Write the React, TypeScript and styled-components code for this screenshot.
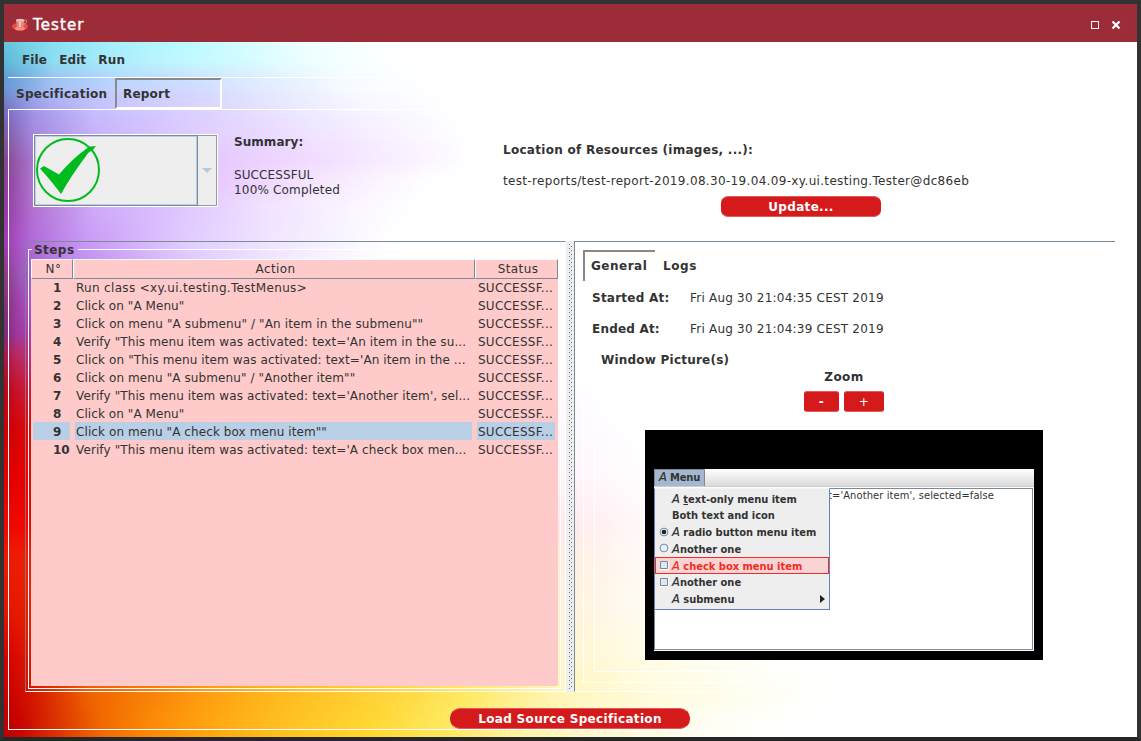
import React from 'react';
import styled, { createGlobalStyle, css } from 'styled-components';

const GlobalStyle = createGlobalStyle`
  * { box-sizing: border-box; }
  html, body { margin: 0; padding: 0; background: #323232; }
  body { font: 12px/15px "DejaVu Sans", sans-serif; color: #333; overflow: hidden; }
`;

const steel = '#7a8a99';

/* ---------- painted background ---------- */

type Stop = [string, number];
const bands: { y: number; stops: Stop[] }[] = [
  { y: 0, stops: [['#66c4dc', 0], ['#84e0f0', 45], ['#a4f1fc', 110], ['#bcfaff', 185], ['#dafeff', 255], ['#f1ffff', 310], ['#fff', 390]] },
  { y: 20, stops: [['#5cb8d8', 0], ['#90dcf2', 50], ['#acecfc', 110], ['#c0f8ff', 180], ['#d8fbff', 250], ['#f0ffff', 315], ['#fff', 400]] },
  { y: 34, stops: [['#60a0d4', 0], ['#98c8f0', 50], ['#b8dcff', 120], ['#cde6ff', 200], ['#e4f4ff', 280], ['#f6fcff', 340], ['#fff', 420]] },
  { y: 50, stops: [['#6c90d4', 0], ['#a8baf4', 45], ['#c4ceff', 110], ['#d4d8ff', 190], ['#e5eaff', 270], ['#f8faff', 350], ['#fff', 440]] },
  { y: 72, stops: [['#7868bc', 0], ['#a294e6', 30], ['#c6bcfc', 90], ['#d8ccff', 170], ['#e5ddff', 250], ['#f4f0ff', 340], ['#fff', 450]] },
  { y: 100, stops: [['#80549c', 0], ['#a884dc', 30], ['#c8aefa', 90], ['#e0ccff', 190], ['#eedcff', 290], ['#f8efff', 380], ['#fff', 470]] },
  { y: 118, stops: [['#844490', 0], ['#ac7ad2', 30], ['#caa8fa', 90], ['#dec0ff', 170], ['#edd2ff', 260], ['#f6eaff', 370], ['#fff', 470]] },
  { y: 140, stops: [['#8a3c98', 0], ['#b078d2', 30], ['#cea8f8', 90], ['#dfbcff', 170], ['#f0d8ff', 260], ['#fbf4ff', 370], ['#fff', 430]] },
  { y: 165, stops: [['#943aa0', 0], ['#b274d4', 30], ['#cfaaf8', 90], ['#dec4ff', 170], ['#f0e2ff', 260], ['#fcf8ff', 360], ['#fff', 420]] },
  { y: 200, stops: [['#a03ab0', 0], ['#b068d8', 26], ['#c898f6', 80], ['#e0ccff', 180], ['#f2e8ff', 280], ['#fff', 390]] },
  { y: 235, stops: [['#8a3880', 0], ['#9c58b8', 16], ['#b880e8', 60], ['#e4ccff', 200], ['#f8f2ff', 300], ['#fff', 380]] },
  { y: 262, stops: [['#803078', 0], ['#a040a8', 14], ['#b858d0', 30], ['#fff', 380]] },
  { y: 292, stops: [['#782878', 0], ['#a038a0', 14], ['#b040b0', 30], ['#fff', 540]] },
  { y: 312, stops: [['#a8184c', 0], ['#b82c64', 14], ['#c03488', 30], ['#fff', 540]] },
  { y: 345, stops: [['#b00818', 0], ['#c81430', 14], ['#d02048', 30], ['#fffcff', 556], ['#fff', 610]] },
  { y: 385, stops: [['#c80008', 0], ['#dc0808', 20], ['#fdf8ff', 556], ['#fff', 630]] },
  { y: 435, stops: [['#e00000', 0], ['#e80400', 24], ['#fff4fa', 556], ['#fffafd', 610], ['#fff', 660]] },
  { y: 482, stops: [['#ee0800', 0], ['#f00800', 24], ['#ffe8ec', 556], ['#fff4f6', 615], ['#fff', 680]] },
  { y: 515, stops: [['#ec1804', 0], ['#f02008', 24], ['#ffeede', 556], ['#fff8f2', 620], ['#fff', 700]] },
  { y: 570, stops: [['#e41400', 0], ['#e82000', 26], ['#fff2d8', 556], ['#fffaf0', 630], ['#fff', 720]] },
  { y: 615, stops: [['#d40000', 0], ['#e01800', 26], ['#ffb020', 260], ['#fff6cc', 556], ['#fffce6', 640], ['#fff', 780]] },
  { y: 652, stops: [['#c80000', 0], ['#d41400', 26], ['#f06400', 86], ['#ff9810', 190], ['#ffb81c', 270], ['#ffd43c', 380], ['#ffe860', 460], ['#fff6bc', 560], ['#fffce0', 660], ['#fff', 830]] },
  { y: 680, stops: [['#bc0000', 0], ['#c80400', 16], ['#d83000', 50], ['#f06800', 96], ['#fc8c08', 150], ['#ffa812', 210], ['#ffc424', 290], ['#ffd834', 370], ['#ffe860', 440], ['#fff4a8', 520], ['#fff9d4', 600], ['#fffdf0', 690], ['#fff', 780]] },
];

const Backdrop = styled.div`
  position: absolute;
  inset: 0;
  z-index: -1;
  display: grid;
`;

const Band = styled.div<{ $y: number; $from: number; $stops: Stop[] }>`
  grid-area: 1 / 1;
  background: linear-gradient(to right, ${p => p.$stops.map(([c, x]) => `${c} ${x}px`).join(', ')});
  ${p => p.$y > 0 && css`mask-image: linear-gradient(to bottom, transparent ${p.$from}px, #000 ${p.$y}px);`}
`;

/* ---------- window chrome ---------- */

const Frame = styled.div`
  width: 1141px;
  height: 741px;
  border: 4px solid #323232;
  border-bottom-color: #262626;
  display: flex;
  flex-direction: column;
`;

const TitleBar = styled.header`
  height: 38px;
  background: #9c2d38;
  color: #fff;
  display: flex;
  align-items: center;
  padding: 4px 16px 0 8px;
`;

const Title = styled.h1`
  margin: 0 auto 0 4px;
  font-size: 15px;
  line-height: 18px;
  font-weight: 400;
  letter-spacing: 1.1px;
  -webkit-text-stroke: 0.4px #fff;
`;

const WindowButtons = styled.div`
  display: flex;
  gap: 12px;
`;

const Client = styled.div`
  position: relative;
  z-index: 0;
  flex: 1;
  padding-left: 4px;
`;

const MenuBar = styled.nav`
  height: 36px;
  border-bottom: 1px solid #fff;
  display: flex;
  gap: 12px;
  padding: 11px 0 0 14px;
`;

const Label = styled.span<{ $ls?: number }>`
  font-weight: bold;
  white-space: nowrap;
  letter-spacing: ${p => p.$ls ?? 0.28}px;
`;

const Text = styled.span<{ $ls?: number }>`
  white-space: nowrap;
  letter-spacing: ${p => p.$ls ?? 0.22}px;
`;

const Tabs = styled.div<{ $h: number }>`
  display: flex;
  height: ${p => p.$h}px;
`;

const MainTab = styled.div<{ $active?: boolean }>`
  padding: 9px 0 0 ${p => (p.$active ? 6 : 8)}px;
  width: 107px;
  ${p => p.$active && css`
    padding-top: 7px;
    border: 2px solid #fff;
    border-top-color: #8a8a8a;
    border-left-color: #8a8a8a;
  `}
`;

const SubTab = styled.div<{ $active?: boolean }>`
  padding: 9px 0 0 8px;
  width: 72px;
  ${p => p.$active && css`
    padding: 7px 0 0 6px;
    border-top: 2px solid #888;
    border-left: 2px solid #888;
  `}
`;

const Body = styled.main`
  width: 1125px;
  height: 621px;
  border: 1px solid #fff;
`;

/* ---------- summary area ---------- */

const SummaryRow = styled.section`
  height: 131px;
  display: flex;
  padding-left: 24px;
`;

const Combo = styled.div`
  margin-top: 24px;
  width: 185px;
  height: 73px;
  border: 1px solid #fff;
  display: flex;
`;

const ComboValue = styled.div`
  width: 164px;
  border: 1px solid ${steel};
  box-shadow: inset 0 0 0 1px #b8cfe5;
  background: #eee;
  padding: 1px 1px;
`;

const ComboArrow = styled.div`
  flex: 1;
  border: 1px solid #999;
  border-left: 0;
  background: #eee;
  display: flex;
  align-items: center;
  justify-content: center;
`;

const SummaryText = styled.div`
  margin: 25px 0 0 16px;
  width: 269px;
  display: flex;
  flex-direction: column;
`;

const Result = styled.div`
  display: flex;
  flex-direction: column;
  margin-top: 18px;
`;

const Location = styled.div`
  display: flex;
  flex-direction: column;
  align-items: flex-start;
  gap: 16px;
  padding-top: 33px;
`;

const Button = styled.button<{ $w: number; $r?: number; $light?: boolean }>`
  display: block;
  width: ${p => p.$w}px;
  height: 21px;
  padding: 1px 0 0;
  border: 1px solid #e05a5a;
  border-left-color: #d41a1a;
  border-right-color: #d41a1a;
  border-radius: ${p => p.$r ?? 7}px;
  background: #d41a1a;
  color: #fff;
  font: bold 12px/18px "DejaVu Sans", sans-serif;
  letter-spacing: 0.33px;
  ${p => p.$light && css`font-weight: normal;`}
`;

const UpdateButton = styled(Button)`
  margin: -9px 0 0 218px;
`;

const LoadButton = styled(Button)`
  margin: 16px 0 0 441px;
`;

/* ---------- split pane ---------- */

const Split = styled.section`
  display: flex;
  height: 451px;
  padding-left: 16px;
`;

const Pane = styled.div<{ $w: number }>`
  width: ${p => p.$w}px;
  border: 1px solid #fff;
  border-top-color: ${steel};
  border-left-color: ${steel};
`;

const LeftPane = styled(Pane)`
  border-left-color: rgba(122, 138, 153, 0.8);
  padding-left: 2px;
`;

const RightPane = styled(Pane)`
  border-right: 0;
  padding: 8px 0 0 8px;
`;

const Divider = styled.div`
  width: 8px;
  background-color: #eee;
  padding: 3px 1px 3px 3px;
`;

const Bumps = styled.div`
  height: 100%;
  background:
    radial-gradient(circle at 0.5px 0.5px, #66717c 0.7px, transparent 0.8px) 0 0 / 4px 4px,
    radial-gradient(circle at 2.5px 2.5px, #66717c 0.7px, transparent 0.8px) 0 0 / 4px 4px;
`;

const Group = styled.fieldset<{ $w: number; $h: number }>`
  margin: 0;
  min-width: 0;
  width: ${p => p.$w}px;
  height: ${p => p.$h}px;
  border: 1px solid #fff;
  padding: 2px;
`;

const Legend = styled.legend<{ $ls?: number; $x?: number }>`
  margin-left: ${p => p.$x ?? 1}px;
  padding: 0 3px 0 2px;
  font-weight: bold;
  height: 15px;
  line-height: 17px;
  letter-spacing: ${p => p.$ls ?? 0.3}px;
`;

const Table = styled.div`
  width: 527px;
  height: 427px;
  background: #fecbca;
`;

const columns = css`
  display: grid;
  grid-template-columns: 42px 402px 83px;
`;

const HeaderRow = styled.div`
  ${columns}
  height: 19px;
`;

const HeaderCell = styled.div`
  border: 1px solid #fff;
  border-right-color: ${steel};
  border-bottom-color: ${steel};
  padding-left: 3px;
  text-align: center;
  line-height: 18px;
  letter-spacing: 0.4px;
`;

const Row = styled.div`
  ${columns}
  height: 18px;
  line-height: 20px;
`;

const Cell = styled.div<{ $sel?: boolean; $ls?: number; $num?: boolean }>`
  height: 18px;
  margin: 0 3px 0 2px;
  padding-left: 1px;
  white-space: nowrap;
  letter-spacing: ${p => p.$ls ?? 0.2}px;
  ${p => p.$num && css`font-weight: bold; padding-left: 20px; letter-spacing: 0;`}
  ${p => p.$sel && css`background: #b8cfe5;`}
`;

const Details = styled.div`
  width: 522px;
  height: 402px;
  border: 1px solid rgba(255, 255, 255, 0.85);
`;

const Field = styled.div`
  display: grid;
  grid-template-columns: 98px auto;
  height: 31px;
  padding: 9px 0 0 8px;
`;

const PictureGroup = styled(Group)`
  margin: 8px 0 0 10px;
`;

const PictureBody = styled.div`
  display: flex;
  flex-direction: column;
  align-items: center;
  padding-top: 1px;
`;

const ZoomButtons = styled.div`
  display: flex;
  gap: 5px;
  margin: 6px 0 18px;
`;

/* ---------- captured window ---------- */

const Picture = styled.div`
  width: 398px;
  height: 230px;
  background: #000;
  padding: 39px 9px 9px;
`;

const Mini = styled.div`
  position: relative;
  height: 182px;
  background: #fff;
  font: 11px/17px "DejaVu Sans Condensed", "DejaVu Sans", sans-serif;
`;

const MiniBar = styled.div`
  height: 18px;
  background: linear-gradient(#fff, #dadada);
  border-bottom: 1px solid #ccc;
`;

const MiniMenu = styled.div`
  width: 51px;
  height: 17px;
  background: #a3b8cc;
  border: 1px solid ${steel};
  border-bottom: 0;
  padding-left: 4px;
  line-height: 15px;
  font-weight: bold;
  white-space: nowrap;
  letter-spacing: -0.15px;
`;

const MiniArea = styled.div`
  margin: 1px 1px 0 0;
  height: 162px;
  border: 1px solid ${steel};
  padding-left: 173px;
  line-height: 13px;
  white-space: nowrap;
  letter-spacing: 0.11px;
`;

const Popup = styled.div`
  position: absolute;
  left: 0;
  top: 19px;
  width: 176px;
  height: 122px;
  background: #eee;
  border: 1px solid #6382bf;
  border-top-color: #f4f4f4;
  padding-top: 1px;
`;

const Item = styled.div<{ $hot?: boolean }>`
  height: 16.8px;
  line-height: 16.8px;
  display: flex;
  align-items: center;
  padding-right: 4px;
  font-weight: bold;
  white-space: nowrap;
  svg { flex: none; }
  ${p => p.$hot && css`
    color: #f02c22;
    background: #f8d4d4;
    box-shadow: inset 0 0 0 1px #ee2e24;
  `}
`;

const Mark = styled.span`
  width: 17px;
  height: 17px;
  display: flex;
  align-items: center;
  padding: 0 0 1px 4px;
`;

const Slanted = styled.span`
  font-family: "DejaVu Sans", sans-serif;
  font-weight: normal;
  font-style: italic;
  font-size: 11.5px;
  -webkit-text-stroke: 0.2px currentColor;
`;

const Grow = styled.span`
  flex: 1;
  padding-top: 2px;
`;

const Check = () => (
  <svg width="66" height="66" viewBox="0 0 66 66">
    <circle cx="32" cy="33" r="31" fill="none" stroke="#00bb1e" strokeWidth="2" />
    <path d="M4 31.500 L8 29 L23 37.500 Q36 22 50 12 Q52 9.500 55 9.500 L60 9 L56 14 Q53 14 50 19 Q35 39 25 57 Q17 46 4 31.500Z" fill="#00bb1e" />
  </svg>
);

const Cup = () => (
  <svg width="17" height="14" viewBox="0 0 17 14">
    <ellipse cx="8" cy="8.500" rx="8" ry="4" fill="#f04a40" />
    <ellipse cx="8" cy="10.400" rx="5" ry="2" fill="#ff8a80" />
    <path d="M4 2 Q8 0 12.500 2 L11.500 9 Q8 11 5 9Z" fill="#e08880" />
    <ellipse cx="8.200" cy="2.200" rx="4.200" ry="1.500" fill="#e8b8b4" />
    <path d="M8 4v5" stroke="#fbd0cc" strokeWidth="1.500" />
    <path d="M12 3 Q15 0 14.500 4 Q14 6 11.800 6" fill="none" stroke="#f08078" />
  </svg>
);

const Radio = ({ on }: { on?: boolean }) => (
  <svg width="10" height="10" viewBox="0 0 10 10">
    <circle cx="5" cy="5" r="3.900" fill="#e6eff8" stroke={steel} />
    {on && <circle cx="5" cy="5" r="2.300" fill="#222" />}
  </svg>
);

const Box = () => (
  <svg width="10" height="10" viewBox="0 0 10 10">
    <path d="M1.500 1.500h7v7h-7z" fill="#dce8f4" stroke={steel} />
    <path d="M1 9.500h8.500V1" fill="none" stroke="#fff" />
  </svg>
);

const steps: [string, number][] = [
  ['Run class <xy.ui.testing.TestMenus>', 0.32],
  ['Click on "A Menu"', 0.07],
  ['Click on menu "A submenu" / "An item in the submenu""', 0.12],
  ["Verify \"This menu item was activated: text='An item in the su...", 0.11],
  ["Click on \"This menu item was activated: text='An item in the ...", 0.11],
  ['Click on menu "A submenu" / "Another item""', 0.1],
  ["Verify \"This menu item was activated: text='Another item', sel...", 0.11],
  ['Click on "A Menu"', 0.07],
  ['Click on menu "A check box menu item""', 0.09],
  ["Verify \"This menu item was activated: text='A check box men...", 0.11],
];

export default function App() {
  return (
    <Frame>
      <GlobalStyle />
      <TitleBar>
        <Cup />
        <Title>Tester</Title>
        <WindowButtons>
          <svg width="9" height="9"><rect x="0.5" y="0.5" width="7" height="7" fill="none" stroke="#fff" /></svg>
          <svg width="9" height="9"><path d="M0.500 0.500l7 7M7.500 0.500l-7 7" stroke="#fff" strokeWidth="2.200" /></svg>
        </WindowButtons>
      </TitleBar>
      <Client>
        <Backdrop>
          {bands.map((b, i) => (
            <Band key={b.y} $y={b.y} $from={i ? bands[i - 1].y : 0} $stops={b.stops} />
          ))}
        </Backdrop>
        <MenuBar>
          <Label $ls={0.15}>File</Label>
          <Label $ls={0.1}>Edit</Label>
          <Label $ls={0.2}>Run</Label>
        </MenuBar>
        <Tabs $h={31}>
          <MainTab><Label>Specification</Label></MainTab>
          <MainTab $active><Label $ls={0.2}>Report</Label></MainTab>
        </Tabs>
        <Body>
          <SummaryRow>
            <Combo>
              <ComboValue><Check /></ComboValue>
              <ComboArrow><svg width="10" height="5"><path d="M0 0h10l-5 5z" fill="#b0cae2" /></svg></ComboArrow>
            </Combo>
            <SummaryText>
              <Label $ls={0.05}>Summary:</Label>
              <Result>
                <Text $ls={0.1}>SUCCESSFUL</Text>
                <Text $ls={0.18}>100% Completed</Text>
              </Result>
            </SummaryText>
            <Location>
              <Label>Location of Resources (images, ...):</Label>
              <Text $ls={0.33}>test-reports/test-report-2019.08.30-19.04.09-xy.ui.testing.Tester@dc86eb</Text>
              <UpdateButton $w={160}>Update...</UpdateButton>
            </Location>
          </SummaryRow>
          <Split>
            <LeftPane $w={541}>
              <Group $w={533} $h={447}>
                <Legend $ls={0.45}>Steps</Legend>
                <Table>
                  <HeaderRow>
                    <HeaderCell>N°</HeaderCell>
                    <HeaderCell>Action</HeaderCell>
                    <HeaderCell>Status</HeaderCell>
                  </HeaderRow>
                  {steps.map(([text, ls], i) => (
                    <Row key={i}>
                      <Cell $num $sel={i === 8}>{i + 1}</Cell>
                      <Cell $ls={ls} $sel={i === 8}>{text}</Cell>
                      <Cell $ls={0.24} $sel={i === 8}>SUCCESSF...</Cell>
                    </Row>
                  ))}
                </Table>
              </Group>
            </LeftPane>
            <Divider><Bumps /></Divider>
            <RightPane $w={541}>
              <Tabs $h={31}>
                <SubTab $active><Label $ls={0.5}>General</Label></SubTab>
                <SubTab><Label $ls={0.6}>Logs</Label></SubTab>
              </Tabs>
              <Details>
                <Field>
                  <Label $ls={0.24}>Started At:</Label>
                  <Text>Fri Aug 30 21:04:35 CEST 2019</Text>
                </Field>
                <Field>
                  <Label $ls={0.2}>Ended At:</Label>
                  <Text>Fri Aug 30 21:04:39 CEST 2019</Text>
                </Field>
                <PictureGroup $w={500} $h={320}>
                  <Legend $ls={0.22} $x={2}>Window Picture(s)</Legend>
                  <PictureBody>
                    <Label $ls={0.4}>Zoom</Label>
                    <ZoomButtons>
                      <Button $w={35} $r={3}>-</Button>
                      <Button $w={40} $r={3} $light>+</Button>
                    </ZoomButtons>
                    <Picture>
                      <Mini>
                        <MiniBar><MiniMenu><Slanted>A</Slanted> Menu</MiniMenu></MiniBar>
                        <MiniArea>t='Another item', selected=false</MiniArea>
                        <Popup>
                          <Item><Mark /><Grow><Slanted>A</Slanted> <u>t</u>ext-only menu item</Grow></Item>
                          <Item><Mark /><Grow>Both text and icon</Grow></Item>
                          <Item><Mark><Radio on /></Mark><Grow><Slanted>A</Slanted> radio button menu item</Grow></Item>
                          <Item><Mark><Radio /></Mark><Grow><Slanted>A</Slanted>nother one</Grow></Item>
                          <Item $hot><Mark><Box /></Mark><Grow><Slanted>A</Slanted> check box menu item</Grow></Item>
                          <Item><Mark><Box /></Mark><Grow><Slanted>A</Slanted>nother one</Grow></Item>
                          <Item>
                            <Mark /><Grow><Slanted>A</Slanted> submenu</Grow>
                            <svg width="5" height="8"><path d="M0 0l5 4-5 4z" fill="#222" /></svg>
                          </Item>
                        </Popup>
                      </Mini>
                    </Picture>
                  </PictureBody>
                </PictureGroup>
              </Details>
            </RightPane>
          </Split>
          <LoadButton $w={240} $r={10}>Load Source Specification</LoadButton>
        </Body>
      </Client>
    </Frame>
  );
}
